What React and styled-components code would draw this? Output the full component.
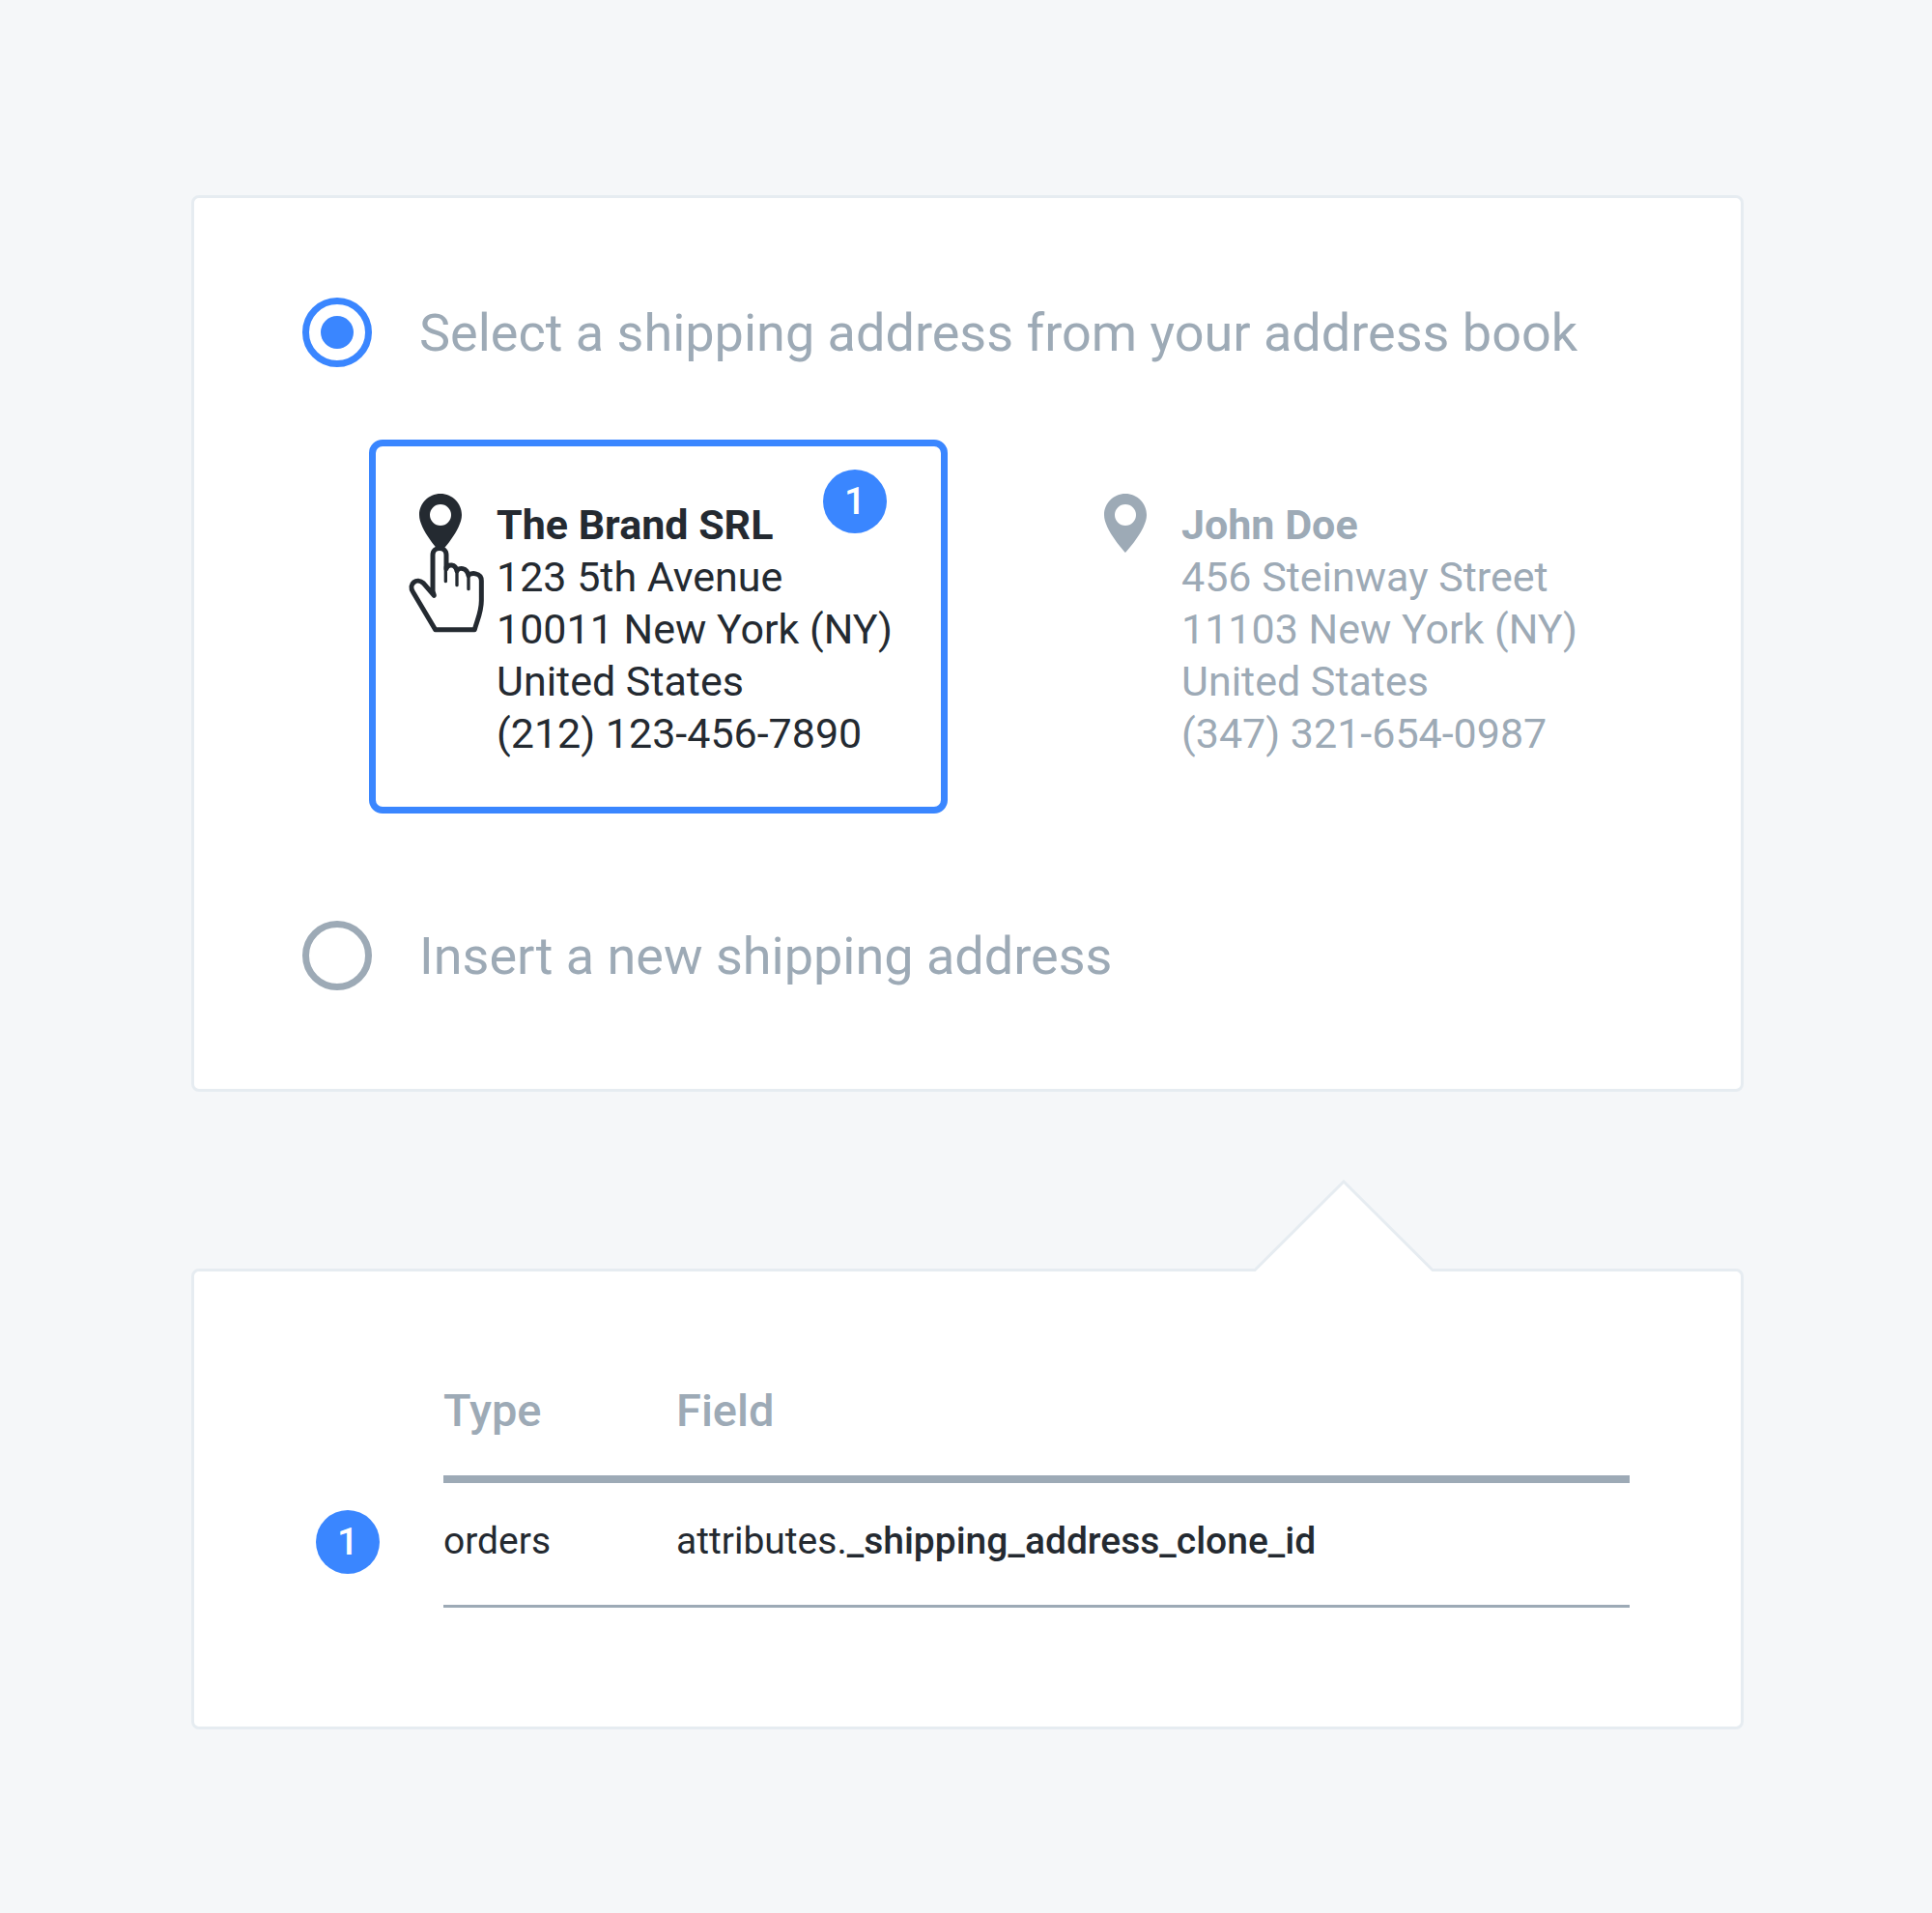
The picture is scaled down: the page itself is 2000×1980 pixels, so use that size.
import React, { useState } from "react";
import styled, { createGlobalStyle } from "styled-components";

const color = {
  page: "#f5f7f9",
  surface: "#ffffff",
  line: "#e6ecf1",
  muted: "#9daab6",
  ink: "#242a31",
  accent: "#3a86ff",
};

const GlobalStyle = createGlobalStyle`
  *, *::before, *::after { box-sizing: border-box; }
  body {
    margin: 0;
    background: ${color.page};
    color: ${color.ink};
    font-family: Roboto, "Liberation Sans", sans-serif;
  }
`;

const Page = styled.main`
  display: flex;
  flex-direction: column;
  gap: 183px;
  min-height: 100vh;
  padding: 202px 195px 190px 198px;
`;

const Panel = styled.section`
  position: relative;
  background: ${color.surface};
  border: 3px solid ${color.line};
  border-radius: 8px;
`;

const ShippingPanel = styled(Panel)`
  padding: 103px 112px 100px 112px;
`;

const FieldsPanel = styled(Panel)`
  padding: 114px 115px 123px 126px;
`;

const Option = styled.label`
  display: flex;
  align-items: flex-start;
  gap: 49px;
  color: ${color.muted};
  font-size: 54px;
  line-height: 74px;
  cursor: pointer;
`;

const Radio = styled.input`
  appearance: none;
  display: grid;
  place-items: center;
  flex: none;
  width: 72px;
  height: 72px;
  margin: 0;
  border: 7px solid ${color.muted};
  border-radius: 50%;

  &:checked {
    border-color: ${color.accent};
  }

  &:checked::before {
    content: "";
    width: 34px;
    height: 34px;
    border-radius: 50%;
    background: ${color.accent};
  }
`;

const AddressBook = styled.div`
  display: grid;
  grid-template-columns: 1fr 1fr;
  gap: 110px;
  margin: 73px 0 111px 69px;
`;

const AddressCard = styled.button`
  position: relative;
  display: flex;
  align-items: flex-start;
  gap: 36px;
  padding: 49px 40px 49px 45px;
  border: 7px solid ${(p) => (p.$selected ? color.accent : "transparent")};
  border-radius: 14px;
  background: none;
  color: ${(p) => (p.$selected ? color.ink : color.muted)};
  font: inherit;
  font-size: 43px;
  line-height: 54px;
  text-align: left;
  cursor: pointer;
`;

const PinDrawing = styled.svg`
  flex: none;
  width: 44px;
  height: 61px;
  fill: currentColor;
`;

const AddressText = styled.span`
  display: flex;
  flex-direction: column;
  padding-top: 5px;
  white-space: nowrap;
`;

const Name = styled.strong`
  font-weight: 700;
`;

const Badge = styled.span`
  display: block;
  width: 66px;
  height: 66px;
  border-radius: 50%;
  background: ${color.accent};
  color: ${color.surface};
  font-size: 39px;
  font-weight: 500;
  line-height: 66px;
  text-align: center;
`;

const CardBadge = styled(Badge)`
  position: absolute;
  top: 24px;
  right: 56px;
`;

const HandDrawing = styled.svg`
  position: absolute;
  top: 101px;
  left: 33px;
  width: 80px;
  height: 93px;
  fill: ${color.surface};
  stroke: ${color.ink};
  stroke-linejoin: round;
`;

const ArrowDrawing = styled.svg`
  position: absolute;
  right: 319px;
  bottom: 100%;
  width: 184px;
  height: 95px;
`;

const Table = styled.table`
  width: 100%;
  border-spacing: 0;
  table-layout: fixed;
  text-align: left;
`;

const MarkerColumn = styled.col`
  width: 132px;
`;

const TypeColumn = styled.col`
  width: 241px;
`;

const HeadCell = styled.th`
  padding: 0 0 37px;
  border-bottom: 8px solid ${color.muted};
  color: ${color.muted};
  font-size: 47px;
  font-weight: 500;
  line-height: 60px;
`;

const Cell = styled.td`
  padding: 27px 0 33px;
  border-bottom: 3px solid ${color.muted};
  font-size: 39px;
  line-height: 66px;
  vertical-align: top;
`;

const MarkerCell = styled.td`
  padding: 28px 0 0;
  vertical-align: top;
`;

const FieldName = styled.b`
  font-weight: 500;
`;

const Pin = () => (
  <PinDrawing viewBox="0 0 44 61" aria-hidden="true">
    <path
      fillRule="evenodd"
      d="M22 0C9.8 0 0 9.8 0 22c0 15.500 22 39 22 39s22-23.500 22-39C44 9.800 34.200 0 22 0Zm0 11a11 11 0 1 1 0 22 11 11 0 0 1 0-22Z"
    />
  </PinDrawing>
);

const Hand = () => (
  <HandDrawing viewBox="66 219 240 279" aria-hidden="true">
    <path
      strokeWidth="15"
      d="M148 379L144 366V253C144 226 186 226 186 253V296C190 280 215 280 219 303C224 291 250 291 255 317C260 307 295 307 295 333V395C295 430 282 455 274 485H152L83 369C66 343 95 322 115 341Z"
    />
    <path strokeWidth="10" strokeLinecap="round" d="M184 290V335M219 300V347M255 314V359" />
  </HandDrawing>
);

/* Overlaps the panel's top border so that the outline opens into the arrow. */
const Arrow = () => (
  <ArrowDrawing viewBox="0 0 184 95" aria-hidden="true">
    <path fill={color.surface} d="M0 95L0 93.500L92 1.500L184 93.500V95Z" />
    <path fill="none" stroke={color.line} strokeWidth="3" d="M-1 94.500L92 2L185 94.500" />
  </ArrowDrawing>
);

const addresses = [
  {
    id: "brand",
    name: "The Brand SRL",
    lines: ["123 5th Avenue", "10011 New York (NY)", "United States", "(212) 123-456-7890"],
  },
  {
    id: "john",
    name: "John Doe",
    lines: ["456 Steinway Street", "11103 New York (NY)", "United States", "(347) 321-654-0987"],
  },
];

export default function App() {
  const [mode, setMode] = useState("book");
  const [selected, setSelected] = useState("brand");

  return (
    <>
      <GlobalStyle />
      <Page>
        <ShippingPanel>
          <Option>
            <Radio
              type="radio"
              name="shipping"
              checked={mode === "book"}
              onChange={() => setMode("book")}
            />
            <span>Select a shipping address from your address book</span>
          </Option>
          <AddressBook>
            {addresses.map((address) => {
              const active = address.id === selected;
              return (
                <AddressCard
                  key={address.id}
                  type="button"
                  aria-pressed={active}
                  $selected={active}
                  onClick={() => setSelected(address.id)}
                >
                  <Pin />
                  <AddressText>
                    <Name>{address.name}</Name>
                    {address.lines.map((line) => (
                      <span key={line}>{line}</span>
                    ))}
                  </AddressText>
                  {active && <CardBadge>1</CardBadge>}
                  {active && <Hand />}
                </AddressCard>
              );
            })}
          </AddressBook>
          <Option>
            <Radio
              type="radio"
              name="shipping"
              checked={mode === "new"}
              onChange={() => setMode("new")}
            />
            <span>Insert a new shipping address</span>
          </Option>
        </ShippingPanel>

        <FieldsPanel>
          <Arrow />
          <Table>
            <colgroup>
              <MarkerColumn />
              <TypeColumn />
              <col />
            </colgroup>
            <thead>
              <tr>
                <td />
                <HeadCell scope="col">Type</HeadCell>
                <HeadCell scope="col">Field</HeadCell>
              </tr>
            </thead>
            <tbody>
              <tr>
                <MarkerCell>
                  <Badge>1</Badge>
                </MarkerCell>
                <Cell>orders</Cell>
                <Cell>
                  attributes.<FieldName>_shipping_address_clone_id</FieldName>
                </Cell>
              </tr>
            </tbody>
          </Table>
        </FieldsPanel>
      </Page>
    </>
  );
}
